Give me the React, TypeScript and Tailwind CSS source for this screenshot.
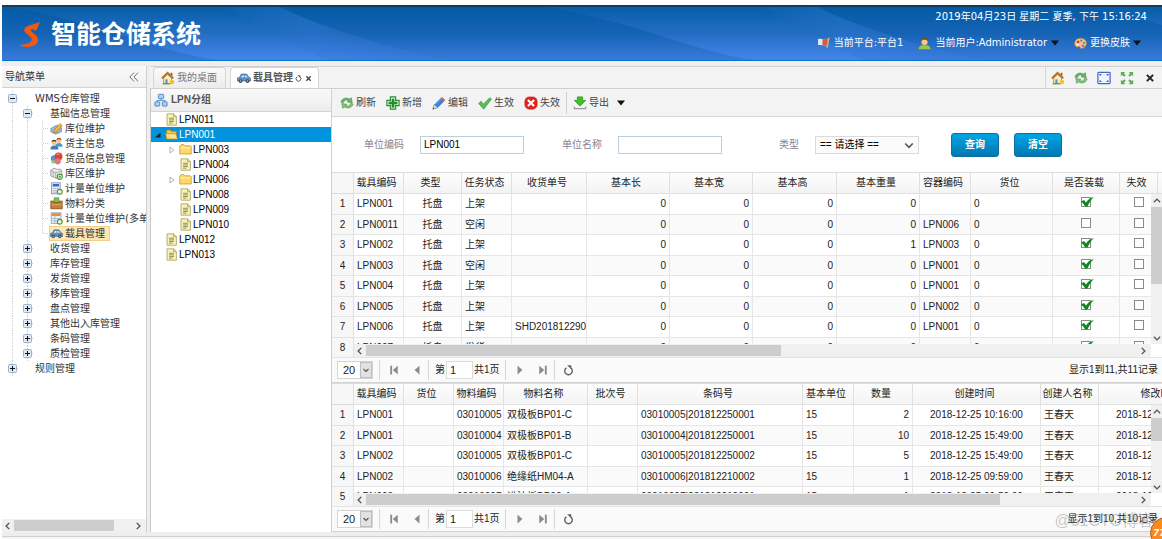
import type { ReactNode } from "react";

// ─── Types ────────────────────────────────────────────────────────────────────

interface IconProps {
  className?: string;
}

type Icon = (props: IconProps) => ReactNode;
type CellKind = "line" | "elbow" | "end" | "plus" | "minus" | "blank";

interface NavNode {
  label: string;
  cells: CellKind[];
  icon?: Icon;
  active?: boolean;
}

interface Column {
  title: string;
  width: string;
  align?: string;
}

// ─── Icons ────────────────────────────────────────────────────────────────────

function Svg({ className = "size-3.5", children }: IconProps & { children: ReactNode }) {
  return (
    <svg viewBox="0 0 16 16" className={`${className} shrink-0`} fill="none" aria-hidden="true">
      {children}
    </svg>
  );
}

const LogoIcon = ({ className }: IconProps) => (
  <svg viewBox="0 0 22 26" className={className} aria-hidden="true">
    <path
      d="M21 0 9 4C5 5.500 4 9 7 11l5 4.500c1.500 2 .5 4.500-2 5.500L0 23.500c7 2.500 15 1.500 18-2 2-3 1-6.500-2-9l-3.500-3c-1-1-.5-2 .5-2.500L17 9Z"
      fill="#ee5a13"
    />
  </svg>
);

const HomeIcon: Icon = ({ className }) => (
  <Svg className={className}>
    <path d="M3 8v6.500h9V8L7.500 4Z" fill="#f6ecd0" stroke="#a98a54" />
    <path d="M1 8.500 7.500 2 14 8.500" stroke="#b4701f" strokeWidth="2.200" />
    <path d="M11 2h2v4l-2-2Z" fill="#9a5a22" />
    <path d="M5 9.500h2.500v5H5Z" fill="#6f8fae" />
    <circle cx="12.500" cy="12.500" r="2.600" fill="#f1c22e" />
    <path d="M2 14.500h8" stroke="#5fa53c" strokeWidth="1.500" />
  </Svg>
);

const RefreshIcon: Icon = ({ className }) => (
  <Svg className={className}>
    <path d="M1 7C2 3 7 1 10.500 3.500L13 2l1 6-6-1.500 1.800-1.200C7.500 4 4.500 4.500 4 7.500Z" fill="#6db26a" stroke="#3e8a44" strokeWidth=".6" />
    <path d="M15 9c-1 4-6 6-9.500 3.500L3 14 2 8.500l6 1-1.800 1.200C8.500 12 11.500 11.500 12 8.500Z" fill="#86c47f" stroke="#3e8a44" strokeWidth=".6" />
  </Svg>
);

const CarIcon: Icon = ({ className }) => (
  <Svg className={className}>
    <path d="M.5 11.500V8L3 7l2-3.500h6L13.500 7l2 1v3.500Z" fill="#5f8fc4" stroke="#35608f" strokeWidth=".7" />
    <path d="M4.500 7 6 5h2v2Zm4.500 0V5h1.500L12 7Z" fill="#dcebf8" />
    <circle cx="4" cy="11.500" r="2.200" fill="#3d4d5e" />
    <circle cx="12" cy="11.500" r="2.200" fill="#3d4d5e" />
    <circle cx="4" cy="11.500" r=".8" fill="#ccc" />
    <circle cx="12" cy="11.500" r=".8" fill="#ccc" />
  </Svg>
);

const OrgIcon: Icon = ({ className }) => (
  <Svg className={className}>
    <path d="M8 6v3M3.500 11V8.500h9V11" stroke="#5a8fc4" />
    <rect x="5" y="1.500" width="6" height="5" rx="1" fill="#a9d1f5" stroke="#3f82c4" />
    <rect x="1" y="10" width="5.500" height="5" rx="1" fill="#a9d1f5" stroke="#3f82c4" />
    <rect x="9.500" y="10" width="5.500" height="5" rx="1" fill="#a9d1f5" stroke="#3f82c4" />
  </Svg>
);

const FlagIcon: Icon = ({ className }) => (
  <Svg className={className}>
    <path d="M0 3c4-2 7 1 13-1l-1 9c-5 2-7-1-12 0Z" fill="#dbe9f6" />
    <path d="M6 2.800c2 .2 4 .2 7-.8l-1 9c-2.500.8-4 .6-6 .2Z" fill="#e2533b" />
    <path d="m14.500 1-2.500 14" stroke="#d6b27c" strokeWidth="1.800" />
  </Svg>
);

const UserIcon: Icon = ({ className }) => (
  <Svg className={className}>
    <path d="M.5 15.500c0-4 2.500-6 7.500-6s7.500 2 7.500 6Z" fill="#9cc34a" stroke="#5e8420" strokeWidth=".7" />
    <circle cx="8" cy="5.800" r="4" fill="#f1c795" />
    <path d="M3.800 6C3.300 2 5.500.5 8 .5S12.700 2 12.200 6c-1-2-2-2.500-4.200-2.500S4.800 4 3.800 6Z" fill="#7d4a1c" />
  </Svg>
);

const PaletteIcon: Icon = ({ className }) => (
  <Svg className={className}>
    <path d="M8 1.500C3 1.500.3 5 .8 9c.5 3 3 4 4.500 3s2 .5 2.500 1.500c2 2 7.500-1 7.500-6 0-4-3.300-6-7.300-6Z" fill="#f0c48c" stroke="#b4793a" strokeWidth=".8" />
    <circle cx="5" cy="6" r="1.600" fill="#d83a2c" />
    <circle cx="9" cy="4.400" r="1.400" fill="#3e85d0" />
    <circle cx="12.300" cy="7.300" r="1.400" fill="#57a83a" />
    <circle cx="4.500" cy="9.500" r="1.200" fill="#fff" />
    <circle cx="11" cy="11" r="1.400" fill="#9a4fb5" />
  </Svg>
);

const FitIcon: Icon = ({ className }) => (
  <Svg className={className}>
    <rect x="1" y="1.500" width="14" height="13" rx="1" fill="#eef3ff" stroke="#4468c8" strokeWidth="1.400" />
    <path d="M3.500 5.500V4H5M11 4h1.500v1.500M12.500 10.500V12H11M5 12H3.500v-1.500" stroke="#2f50b4" strokeWidth="1.200" />
  </Svg>
);

const ExpandIcon: Icon = ({ className }) => (
  <Svg className={className}>
    <path d="M1 1h5L4.500 2.500 6.500 5 5 6.500 2.500 4.500 1 6ZM15 1v5l-1.500-1.500L11 6.500 9.500 5l2-2.500L10 1ZM1 15v-5l1.500 1.500L5 9.500 6.500 11l-2 2.500L6 15ZM15 15h-5l1.500-1.500-2-2.500L11 9.500l2.500 2L15 10Z" fill="#5fae57" />
  </Svg>
);

const CloseIcon: Icon = ({ className }) => (
  <Svg className={className}>
    <path d="m3 3 10 10M13 3 3 13" stroke="currentColor" strokeWidth="3.200" />
  </Svg>
);

const ReloadIcon: Icon = ({ className }) => (
  <Svg className={className}>
    <path d="M5 4a5.500 5.500 0 1 0 6 0" stroke="currentColor" strokeWidth="2" />
    <path d="M6 .5h6V6Z" fill="currentColor" />
  </Svg>
);

const AddIcon: Icon = ({ className }) => (
  <Svg className={className}>
    <path d="M5 1h6v4h4v6h-4v4H5v-4H1V5h4Z" fill="#d9f2d6" stroke="#2f8a35" strokeWidth="1.300" />
    <path d="M6.500 3h3v3.500H13v3H9.500V13h-3V9.500H3v-3h3.500Z" fill="#1d9128" />
  </Svg>
);

const EditIcon: Icon = ({ className }) => (
  <Svg className={className}>
    <path d="m1 15 1.500-5L10 2.500 13.500 6 6 13.500Z" fill="#3b86dd" stroke="#1c58a8" strokeWidth=".7" />
    <path d="m3.500 9.500 7-7" stroke="#a7d2fa" />
    <path d="m10 2.500 1.500-1.500 3.700 3.500L13.500 6Z" fill="#e2603c" />
    <path d="m1 15 1.500-5L6 13.500Z" fill="#f5dcae" />
    <path d="m1 15 .6-2 1.500 1.400Z" fill="#333" />
  </Svg>
);

const TickIcon: Icon = ({ className }) => (
  <Svg className={className}>
    <path d="M.8 8.500 3.500 6 6 9.500l7.500-7.500 1.800 1.500L6.500 15Z" fill="#5cbf55" stroke="#2e8b34" strokeWidth=".8" />
  </Svg>
);

const CrossIcon: Icon = ({ className }) => (
  <Svg className={className}>
    <rect x="1" y="1" width="14" height="14" rx="5" fill="#e3241d" stroke="#b01410" strokeWidth=".6" />
    <path d="m4.500 4.500 7 7M11.500 4.500l-7 7" stroke="#fff" strokeWidth="2.400" />
  </Svg>
);

const ExportIcon: Icon = ({ className }) => (
  <Svg className={className}>
    <path d="M5 1h6v4h3.500L8 11.500 1.500 5H5Z" fill="#39c424" stroke="#228a16" strokeWidth=".8" />
    <path d="M1.500 12v2.500h13V12" stroke="#9a9a9a" strokeWidth="1.400" />
  </Svg>
);

const FileIcon: Icon = ({ className }) => (
  <Svg className={className}>
    <path d="M2.500 1h8L14 4.500V15H2.500Z" fill="#f7f3b4" stroke="#a6a05a" />
    <path d="M10.500 1v3.500H14" stroke="#a6a05a" />
    <path d="M5 6.500h6M5 8.500h6M5 10.500h6M5 12.500h4" stroke="#7f7b52" />
  </Svg>
);

const FolderIcon: Icon = ({ className }) => (
  <Svg className={className}>
    <path d="M1 13.500v-10L2.500 2H6l1.500 1.500H14l1 1v9Z" fill="#ffd867" stroke="#c99a22" />
    <path d="M1.800 6h12.400" stroke="#fff1b4" strokeWidth="1.500" />
  </Svg>
);

const FolderOpenIcon: Icon = ({ className }) => (
  <Svg className={className}>
    <path d="M2 13V3.500L3 2.500h3.500L8 4h6v3" fill="#f5c64a" stroke="#b98a1c" />
    <path d="M2.500 13.500.8 7h12.400l2.300 6.500Z" fill="#ffe48c" stroke="#c99a22" />
  </Svg>
);

const ShelfIcon: Icon = ({ className }) => (
  <Svg className={className}>
    <path d="M1 8 8 4l6 3v5l-7 3-6-3Z" fill="#9db8d8" stroke="#5f7ea6" strokeWidth=".8" />
    <path d="m5 10 7-8 3 2.500-7 8-3.500.5Z" fill="#f5b53c" stroke="#a8701a" strokeWidth=".8" />
  </Svg>
);

const PeopleIcon: Icon = ({ className }) => (
  <Svg className={className}>
    <path d="M6.500 12c0-3 1.500-4.500 4.500-4.500s4.500 1.500 4.500 4.500Z" fill="#4f9ad8" />
    <circle cx="11" cy="4.500" r="3" fill="#f3c795" />
    <path d="M8 4c0-4 6-4 6 0-2-1.500-4-1.500-6 0Z" fill="#a8431c" />
    <path d="M.5 15.500c0-3.500 1.500-5 5-5s5 1.500 5 5Z" fill="#3f7fbe" />
    <circle cx="5" cy="7" r="3" fill="#f3c795" />
    <path d="M2 6.500c0-4 6-4 6 0-2-1.500-4-1.500-6 0Z" fill="#5e3516" />
  </Svg>
);

const GoodsIcon: Icon = ({ className }) => (
  <Svg className={className}>
    <circle cx="5" cy="8" r="4" fill="#5b93cf" />
    <circle cx="10.500" cy="5.500" r="4.800" fill="#d8433a" />
    <circle cx="9.500" cy="11.500" r="3.800" fill="#e9737a" />
    <path d="M8 3.500c1-1 3-1.200 4-.5" stroke="#f7b0aa" strokeWidth="1.200" />
    <circle cx="4" cy="12" r="2.300" fill="#8fbf7a" />
  </Svg>
);

const CubeIcon: Icon = ({ className }) => (
  <Svg className={className}>
    <path d="m1 4 4-2.500 4 1.500 4-.5 1.500 3v6L8 14l-7-3Z" fill="#ececec" stroke="#8f8f8f" />
    <path d="m1 4.500 6 2.500 7.500-2M7 7v6.500M4 6v6" stroke="#9c9c9c" />
    <circle cx="12" cy="12" r="3.200" fill="#eaf6e2" stroke="#4d9a3a" strokeWidth="1.300" />
    <path d="M12 10.500v3M10.500 12h3" stroke="#3a8a2b" />
  </Svg>
);

const CalcIcon: Icon = ({ className }) => (
  <Svg className={className}>
    <rect x="2" y="1" width="10.500" height="13.500" fill="#e6edf6" stroke="#7287a5" />
    <rect x="3.500" y="2.500" width="7.500" height="3" fill="#3a68b4" />
    <path d="M4 8h7M4 10.500h5M4 12.500h4" stroke="#8796ac" strokeDasharray="1.500 1" />
    <circle cx="12" cy="12" r="3" fill="#eaf6e2" stroke="#4d9a3a" strokeWidth="1.400" />
  </Svg>
);

const BoxIcon: Icon = ({ className }) => (
  <Svg className={className}>
    <rect x="5" y="1" width="6" height="6" fill="#7cc24e" stroke="#55852f" strokeWidth=".7" />
    <path d="M1 5h3.500v2h7V5H15v9.500H1Z" fill="#c57f3a" stroke="#84501c" />
    <path d="M1.500 9.500h13" stroke="#e2a765" strokeWidth="1.200" />
  </Svg>
);

const SheetIcon: Icon = ({ className }) => (
  <Svg className={className}>
    <rect x="1.500" y="1" width="12" height="13" fill="#eef3f9" stroke="#8ba0bd" />
    <rect x="2" y="1.500" width="11" height="3.500" fill="#f08a3a" />
    <path d="M2 8h11M2 11h8M6 5v9" stroke="#9bb0ca" />
    <circle cx="12" cy="12" r="3" fill="#eaf6e2" stroke="#4d9a3a" strokeWidth="1.400" />
  </Svg>
);

const Caret: Icon = ({ className = "h-1.5 w-2" }) => (
  <svg viewBox="0 0 8 5" className={`${className} shrink-0`} aria-hidden="true">
    <path d="M0 0h8L4 5Z" fill="#111" />
  </svg>
);

function Chevron({ d, className = "size-2.5" }: IconProps & { d: "up" | "down" | "left" | "right" }) {
  const paths = { up: "M3 10 8 5l5 5", down: "m3 6 5 5 5-5", left: "m10 3-5 5 5 5", right: "m6 3 5 5-5 5" };
  return (
    <Svg className={className}>
      <path d={paths[d]} stroke="#555" strokeWidth="2.200" />
    </Svg>
  );
}

// ─── Data ─────────────────────────────────────────────────────────────────────

const NAV: NavNode[] = [
  { label: "WMS仓库管理", cells: ["minus", "blank"] },
  { label: "基础信息管理", cells: ["line", "minus", "blank"] },
  { label: "库位维护", cells: ["line", "line", "elbow"], icon: ShelfIcon },
  { label: "货主信息", cells: ["line", "line", "elbow"], icon: PeopleIcon },
  { label: "货品信息管理", cells: ["line", "line", "elbow"], icon: GoodsIcon },
  { label: "库区维护", cells: ["line", "line", "elbow"], icon: CubeIcon },
  { label: "计量单位维护", cells: ["line", "line", "elbow"], icon: CalcIcon },
  { label: "物料分类", cells: ["line", "line", "elbow"], icon: BoxIcon },
  { label: "计量单位维护(多单位)", cells: ["line", "line", "elbow"], icon: SheetIcon },
  { label: "载具管理", cells: ["line", "line", "end"], icon: CarIcon, active: true },
  { label: "收货管理", cells: ["line", "plus", "blank"] },
  { label: "库存管理", cells: ["line", "plus", "blank"] },
  { label: "发货管理", cells: ["line", "plus", "blank"] },
  { label: "移库管理", cells: ["line", "plus", "blank"] },
  { label: "盘点管理", cells: ["line", "plus", "blank"] },
  { label: "其他出入库管理", cells: ["line", "plus", "blank"] },
  { label: "条码管理", cells: ["line", "plus", "blank"] },
  { label: "质检管理", cells: ["line", "plus", "blank"] },
  { label: "规则管理", cells: ["plus", "blank"] },
];

const LPN_TREE = [
  { label: "LPN011", child: false, icon: FileIcon, arrow: "" },
  { label: "LPN001", child: false, icon: FolderOpenIcon, arrow: "open" },
  { label: "LPN003", child: true, icon: FolderIcon, arrow: "closed" },
  { label: "LPN004", child: true, icon: FileIcon, arrow: "" },
  { label: "LPN006", child: true, icon: FolderIcon, arrow: "closed" },
  { label: "LPN008", child: true, icon: FileIcon, arrow: "" },
  { label: "LPN009", child: true, icon: FileIcon, arrow: "" },
  { label: "LPN010", child: true, icon: FileIcon, arrow: "" },
  { label: "LPN012", child: false, icon: FileIcon, arrow: "" },
  { label: "LPN013", child: false, icon: FileIcon, arrow: "" },
];

const TOOLS = [
  { label: "刷新", icon: RefreshIcon },
  { label: "新增", icon: AddIcon },
  { label: "编辑", icon: EditIcon },
  { label: "生效", icon: TickIcon },
  { label: "失效", icon: CrossIcon },
];

const CARRIER_COLUMNS: Column[] = [
  { title: "载具编码", width: "w-[50px]" },
  { title: "类型", width: "w-[58px]", align: "text-center" },
  { title: "任务状态", width: "w-[50px]" },
  { title: "收货单号", width: "w-[75px]" },
  { title: "基本长", width: "w-[83px]", align: "text-right" },
  { title: "基本宽", width: "w-[83px]", align: "text-right" },
  { title: "基本高", width: "w-[84px]", align: "text-right" },
  { title: "基本重量", width: "w-[83px]", align: "text-right" },
  { title: "容器编码", width: "w-[51px]" },
  { title: "货位", width: "w-[82px]" },
  { title: "是否装载", width: "w-[67px]", align: "text-center" },
  { title: "失效", width: "w-[38px]", align: "text-center" },
  { title: "", width: "w-[60px]" },
];

const CARRIER_ROWS: (string | boolean)[][] = [
  ["LPN001", "托盘", "上架", "", "0", "0", "0", "0", "", "0", true, false, ""],
  ["LPN0011", "托盘", "空闲", "", "0", "0", "0", "0", "LPN006", "0", false, false, ""],
  ["LPN002", "托盘", "上架", "", "0", "0", "0", "1", "LPN003", "0", true, false, ""],
  ["LPN003", "托盘", "空闲", "", "0", "0", "0", "0", "LPN001", "0", true, false, ""],
  ["LPN004", "托盘", "上架", "", "0", "0", "0", "0", "LPN001", "0", true, false, ""],
  ["LPN005", "托盘", "上架", "", "0", "0", "0", "0", "LPN002", "0", true, false, ""],
  ["LPN006", "托盘", "上架", "SHD20181229001", "0", "0", "0", "0", "LPN001", "0", true, false, ""],
  ["LPN007", "托盘", "发货", "", "0", "0", "0", "0", "", "0", true, false, ""],
];

const STOCK_COLUMNS: Column[] = [
  { title: "载具编码", width: "w-[50px]" },
  { title: "货位", width: "w-[50px]" },
  { title: "物料编码", width: "w-[50px]" },
  { title: "物料名称", width: "w-[84px]" },
  { title: "批次号", width: "w-[50px]" },
  { title: "条码号", width: "w-[165px]" },
  { title: "基本单位", width: "w-[51px]" },
  { title: "数量", width: "w-[59px]", align: "text-right" },
  { title: "创建时间", width: "w-[128px]", align: "text-center" },
  { title: "创建人名称", width: "w-[58px]" },
  { title: "修改时间", width: "w-[128px]", align: "text-center" },
];

const STOCK_ROWS: (string | boolean)[][] = [
  ["LPN001", "", "03010005", "双极板BP01-C", "", "03010005|201812250001", "15", "2", "2018-12-25 10:16:00", "王春天", "2018-12-25 10:16:00"],
  ["LPN001", "", "03010004", "双极板BP01-B", "", "03010004|201812250001", "15", "10", "2018-12-25 15:49:00", "王春天", "2018-12-25 15:49:00"],
  ["LPN002", "", "03010005", "双极板BP01-C", "", "03010005|201812250002", "15", "5", "2018-12-25 15:49:00", "王春天", "2018-12-25 15:49:00"],
  ["LPN002", "", "03010006", "绝缘纸HM04-A", "", "03010006|201812210002", "15", "1", "2018-12-25 09:59:00", "王春天", "2018-12-25 09:59:00"],
  ["LPN003", "", "03010007", "进油板BP02-A", "", "03010007|201812210001", "15", "1", "2018-12-25 09:59:00", "王春天", "2018-12-25 09:59:00"],
];

// ─── Header ───────────────────────────────────────────────────────────────────

function HeaderWaves() {
  return (
    <svg className="absolute inset-0 h-full w-full" aria-hidden="true">
      <defs>
        <linearGradient id="sheet" x1="0" y1="0" x2="0" y2="1">
          <stop offset="0" stopColor="#5b9bff" stopOpacity=".04" />
          <stop offset="1" stopColor="#5b9bff" stopOpacity=".35" />
        </linearGradient>
        <linearGradient id="beam" x1="0" y1="0" x2="1" y2="0">
          <stop offset="0" stopColor="#5b9bff" stopOpacity=".1" />
          <stop offset=".35" stopColor="#5b9bff" stopOpacity=".22" />
          <stop offset="1" stopColor="#5b9bff" stopOpacity="0" />
        </linearGradient>
        <pattern id="waves" x="8" width="537" height="55" patternUnits="userSpaceOnUse">
          <path d="M0 0c60 10 110 28 143 38s60 16 90 17h85L218 0Z" fill="url(#sheet)" />
          <path d="m218 0 100 55h130C380 42 310 20 270 0Z" fill="url(#beam)" />
        </pattern>
      </defs>
      <rect width="100%" height="100%" fill="url(#waves)" />
    </svg>
  );
}

function Header() {
  return (
    <header className="relative flex h-14 shrink-0 justify-between overflow-hidden border-t-2 border-b border-t-[#17395c] border-b-[#0d6fce] bg-linear-to-b from-[#025ba5] via-[#1563b5] to-[#367bdc] text-white">
      <HeaderWaves />
      <div className="relative flex items-center gap-2.5 pt-[3px] pl-[17px]">
        <LogoIcon className="h-[26px] w-[22px]" />
        <h1 className="text-[25px] leading-8 font-bold">智能仓储系统</h1>
      </div>
      <div className="relative flex flex-col items-end gap-3 pt-[3px] leading-[14px]">
        <p className="pr-[15px]">2019年04月23日 星期二 夏季, 下午 15:16:24</p>
        <div className="flex items-center gap-[15px] pr-[21px]">
          <span className="flex items-center gap-1">
            <FlagIcon className="size-3" />
            当前平台:平台1
          </span>
          <button className="flex items-center gap-1">
            <UserIcon className="size-[13px]" />
            当前用户:Administrator
            <Caret />
          </button>
          <button className="flex items-center gap-[3px]">
            <PaletteIcon className="size-[13px]" />
            更换皮肤
            <Caret />
          </button>
        </div>
      </div>
    </header>
  );
}

// ─── Navigation tree ──────────────────────────────────────────────────────────

function TreeCell({ kind }: { kind: CellKind }) {
  const box = kind === "plus" || kind === "minus";
  return (
    <svg viewBox="0 0 15 15" className="size-[15px] shrink-0" fill="none" aria-hidden="true">
      {kind !== "blank" && (
        <path d={kind === "end" ? "M7.500 0v8" : "M7.500 0v15"} stroke="#cfcfcf" strokeDasharray="1 1" />
      )}
      {kind !== "blank" && kind !== "line" && <path d="M8 7.500h6" stroke="#cfcfcf" strokeDasharray="1 1" />}
      {box && (
        <>
          <rect x="3.500" y="3.500" width="8" height="8" rx="1" fill="#dfe9f4" stroke="#9cb3cd" />
          <path d={kind === "plus" ? "M5 7.500h5M7.500 5v5" : "M5 7.500h5"} stroke="#111" />
        </>
      )}
    </svg>
  );
}

function NavPanel() {
  return (
    <aside className="flex w-[145px] shrink-0 flex-col border-r border-[#d0d0d0] bg-white">
      <div className="flex h-[22px] shrink-0 items-center justify-between border-b border-[#d3d3d3] bg-linear-to-b from-[#fafafa] to-[#efefef] pr-[7px] pl-[3px]">
        <h2 className="text-[#333]">导航菜单</h2>
        <button aria-label="收起" className="text-[#666]">
          <Svg className="size-2.5">
            <path d="M8 1 1.500 8 8 15M14.500 1 8 8l6.500 7" stroke="currentColor" strokeWidth="1.500" />
          </Svg>
        </button>
      </div>
      <ul className="flex-1 overflow-hidden pt-[3px] pl-[3px]">
        {NAV.map((node) => (
          <li key={node.label} className="flex h-[15px] items-center whitespace-nowrap text-[#333]">
            {node.cells.map((kind, i) => (
              <TreeCell key={i} kind={kind} />
            ))}
            <span
              className={`flex items-center gap-0.5 leading-[13px] ${
                node.active ? "bg-[#fbe6b4] pr-1 outline outline-[#f1cf8a]" : ""
              }`}
            >
              {node.icon && <node.icon className="size-[13px]" />}
              {node.label}
            </span>
          </li>
        ))}
      </ul>
      <HScroll thumb="w-[100px]" />
    </aside>
  );
}

// ─── Scrollbars ───────────────────────────────────────────────────────────────

function HScroll({ thumb }: { thumb: string }) {
  return (
    <div className="flex h-[13px] shrink-0 items-center justify-between bg-[#f0f0f0] pr-0.5">
      <div className="flex h-full flex-1 items-center">
        <button aria-label="向左" className="flex w-3 justify-center">
          <Chevron d="left" />
        </button>
        <div className={`h-[11px] bg-[#cdcdcd] ${thumb}`} />
      </div>
      <button aria-label="向右" className="flex w-3 justify-center">
        <Chevron d="right" />
      </button>
    </div>
  );
}

function VScroll({ thumb }: { thumb: string }) {
  return (
    <div className="absolute top-[21px] right-0 bottom-0 flex w-[11px] flex-col items-center justify-between bg-[#f0f0f0]">
      <div className="flex w-full flex-col items-center">
        <button aria-label="向上" className="flex h-[13px] items-center">
          <Chevron d="up" />
        </button>
        <div className={`w-full bg-[#cdcdcd] ${thumb}`} />
      </div>
      <button aria-label="向下" className="flex h-[13px] items-center">
        <Chevron d="down" />
      </button>
    </div>
  );
}

// ─── Data grid ────────────────────────────────────────────────────────────────

function CheckCell({ checked, label }: { checked: boolean; label: string }) {
  return (
    <span className="relative mx-auto flex size-[10px] -translate-y-0.5">
      <input
        type="checkbox"
        aria-label={label}
        checked={checked}
        readOnly
        className="size-[10px] appearance-none border border-[#8a8a8a] bg-white"
      />
      {checked && (
        <svg viewBox="0 0 13 10" className="absolute bottom-0 left-0 h-[10px] w-[13px]" aria-hidden="true">
          <path d="M0 4.500 3 3l2 2.500C7 2.500 9.500.5 13 0 10 2.500 8 6 6.500 9.500H4C3 7.500 2 6 0 4.500Z" fill="#0b8a1b" />
        </svg>
      )}
    </span>
  );
}

interface GridProps {
  name: string;
  columns: Column[];
  rows: (string | boolean)[][];
  tableWidth: string;
  height: string;
  hThumb: string;
  vThumb: string;
}

function DataGrid({ name, columns, rows, tableWidth, height, hThumb, vThumb }: GridProps) {
  return (
    <div className={`flex min-h-0 overflow-hidden border-t border-[#dcdcdc] bg-white ${height}`}>
      <div className="w-[22px] shrink-0 overflow-hidden border-r border-[#e0e0e0] bg-[#f7f7f7] text-center">
        <div className="h-[21px] border-b border-[#dcdcdc]" />
        {rows.map((_, i) => (
          <div key={i} className="h-[21px] border-b border-[#e4e4e4] leading-5 odd:h-5">
            {i + 1}
          </div>
        ))}
      </div>
      <div className="flex min-w-0 flex-1 flex-col">
        <div className="relative min-h-0 flex-1 overflow-hidden">
          <table aria-label={name} className={`table-fixed border-separate border-spacing-0 leading-[14px] whitespace-nowrap ${tableWidth}`}>
            <thead>
              <tr className="h-[21px] bg-linear-to-b from-[#fdfdfd] to-[#f3f3f3]">
                {columns.map((col, i) => (
                  <th
                    key={i}
                    className={`overflow-hidden border-r border-b border-[#e0e0e0] p-0 pr-1 text-center font-normal ${col.width}`}
                  >
                    {col.title}
                  </th>
                ))}
              </tr>
            </thead>
            <tbody>
              {rows.map((row, r) => (
                <tr key={r} className="h-[21px] even:h-5 even:bg-[#fafafa]">
                  {row.map((value, c) => (
                    <td
                      key={c}
                      className={`overflow-hidden border-r border-b border-[#e6e6e6] px-[3px] py-0 ${columns[c].align ?? ""}`}
                    >
                      {typeof value === "boolean" ? <CheckCell checked={value} label={columns[c].title} /> : value}
                    </td>
                  ))}
                </tr>
              ))}
            </tbody>
          </table>
          <VScroll thumb={vThumb} />
        </div>
        <div className="mr-[11px]">
          <HScroll thumb={hThumb} />
        </div>
      </div>
    </div>
  );
}

function Separator() {
  return <span className="h-5 w-px shrink-0 bg-[#d6d6d6]" />;
}

function PageButton({ label, d }: { label: string; d: string }) {
  return (
    <button aria-label={label} className="flex w-[23px] justify-center text-[#8c8c8c]">
      <Svg className="size-2.5">
        <path d={d} fill="currentColor" />
      </Svg>
    </button>
  );
}

function Pager({ name, total }: { name: string; total: number }) {
  return (
    <div className="flex h-[26px] shrink-0 items-center border-t border-b border-t-[#e4e4e4] border-b-[#d3d3d3] bg-[#fafafa] pr-1 pl-[5px]">
      <div className="relative flex h-[18px] w-9 border border-[#d5d5d5] bg-white">
        <select aria-label={`${name}每页条数`} className="w-full appearance-none pl-[5px] text-[11px] leading-4">
          <option>20</option>
        </select>
        <span className="pointer-events-none absolute inset-y-0 right-0 flex w-3 items-center justify-center border border-[#bdbdbd] bg-[#e2e2e2]">
          <Chevron d="down" className="size-2" />
        </span>
      </div>
      <span className="w-1.5" />
      <Separator />
      <span className="w-0.5" />
      <PageButton label="首页" d="M2 1h3v14H2ZM14 1v14L6 8Z" />
      <PageButton label="上一页" d="M12 1v14L4 8Z" />
      <Separator />
      <label className="flex items-center gap-px pl-1.5">
        第
        <input defaultValue="1" className="h-[18px] w-[27px] border border-[#dcdcdc] bg-white pl-[3px] text-[11px]" />
      </label>
      <span className="w-8 pl-px">共1页</span>
      <Separator />
      <span className="w-0.5" />
      <PageButton label="下一页" d="M4 1v14l8-7Z" />
      <PageButton label="末页" d="M2 1v14l8-7ZM11 1h3v14h-3Z" />
      <Separator />
      <button aria-label="刷新" className="flex w-[26px] justify-center text-[#665c5c]">
        <ReloadIcon className="size-[11px]" />
      </button>
      <span className="ml-auto">{`显示1到${total},共${total}记录`}</span>
    </div>
  );
}

// ─── Workspace ────────────────────────────────────────────────────────────────

function TabStrip() {
  return (
    <div className="flex h-[23px] shrink-0 justify-between border-t border-b border-[#d0d0d0] bg-[#f3f3f3]">
      <div className="flex gap-1 pl-[3px]">
        <button className="flex w-[73px] items-center gap-0.5 rounded-t border-x border-t border-[#d5d5d5] bg-linear-to-b from-[#fafafa] to-[#ececec] pl-[7px] text-[#777]">
          <HomeIcon />
          我的桌面
        </button>
        <div className="flex w-[89px] items-center rounded-t border-x border-t border-[#d5d5d5] bg-white pl-[6px] text-[#555]">
          <button className="flex items-center gap-0.5 font-bold">
            <CarIcon />
            载具管理
          </button>
          <button aria-label="刷新标签" className="ml-0.5 text-[#444]">
            <ReloadIcon className="size-[7px]" />
          </button>
          <button aria-label="关闭标签" className="ml-[3px] text-[#444]">
            <CloseIcon className="size-[7px]" />
          </button>
        </div>
      </div>
      <div className="flex items-center gap-[9px] border-l border-[#d5d5d5] px-[5px] text-[#222]">
        <button aria-label="首页">
          <HomeIcon />
        </button>
        <button aria-label="刷新">
          <RefreshIcon />
        </button>
        <button aria-label="适应窗口">
          <FitIcon />
        </button>
        <button aria-label="全屏">
          <ExpandIcon />
        </button>
        <button aria-label="关闭" className="flex w-3.5 justify-center">
          <CloseIcon className="size-2.5" />
        </button>
      </div>
    </div>
  );
}

function LpnPanel() {
  return (
    <section className="w-[182px] shrink-0 border-r border-l border-r-[#d0d0d0] border-l-[#c8c8c8] bg-white">
      <h2 className="flex h-[23px] items-center gap-[3px] border-b border-[#d3d3d3] bg-linear-to-b from-[#fafafa] to-[#ececec] pl-[3px] font-bold text-[#555]">
        <OrgIcon />
        LPN分组
      </h2>
      <ul className="text-black">
        {LPN_TREE.map((node) => (
          <li
            key={node.label}
            className={`flex h-[15px] items-center ${node.child ? "pl-3.5" : ""} ${
              node.arrow === "open" ? "bg-[#0092dc] text-white" : ""
            }`}
          >
            <span className="flex w-3.5 justify-center">
              {node.arrow === "open" && (
                <Svg className="size-2">
                  <path d="M13 3v10H2Z" fill="#222" />
                </Svg>
              )}
              {node.arrow === "closed" && (
                <Svg className="size-2">
                  <path d="M4 2v12l8-6Z" fill="#fff" stroke="#999" strokeWidth="1.500" />
                </Svg>
              )}
            </span>
            <node.icon className="mr-px size-[13px]" />
            {node.label}
          </li>
        ))}
      </ul>
    </section>
  );
}

function Toolbar() {
  return (
    <div className="flex h-7 shrink-0 items-center gap-2.5 border-b border-[#d8d8d8] bg-[#f3f3f3] pl-2 text-[#444]">
      {TOOLS.map((tool) => (
        <button key={tool.label} className="flex items-center gap-0.5">
          <tool.icon />
          {tool.label}
        </button>
      ))}
      <button className="-ml-1 flex items-center gap-0.5 border-l border-[#d0d0d0] py-1 pl-1.5">
        <ExportIcon />
        <span className="pr-1.5">导出</span>
        <Caret />
      </button>
    </div>
  );
}

function SearchForm() {
  const field = "ml-4 h-[18px] w-[104px] border border-[#b9cfe0] bg-white px-[3px] text-[10px] text-black";
  const button =
    "h-6 w-12 rounded-[3px] border border-[#0e6f9c] bg-linear-to-b from-[#00a6e6] to-[#0078b0] font-bold text-white";
  return (
    <form className="flex h-[55px] shrink-0 items-center bg-white pl-8 text-[#8a8296]">
      <label className="flex items-center">
        单位编码
        <input className={field} defaultValue="LPN001" />
      </label>
      <label className="ml-[38px] flex items-center">
        单位名称
        <input className={field} />
      </label>
      <label className="relative ml-[57px] flex items-center">
        类型
        <select className="ml-4 h-[18px] w-[104px] appearance-none border border-[#dadada] bg-[#fbfbfb] px-1 leading-4 text-black">
          <option>== 请选择 ==</option>
        </select>
        <Chevron d="down" className="pointer-events-none absolute right-1 size-3" />
      </label>
      <button type="button" className={`ml-8 ${button}`}>
        查询
      </button>
      <button type="button" className={`ml-[15px] ${button}`}>
        清空
      </button>
    </form>
  );
}

export default function App() {
  return (
    <div className="relative flex h-screen flex-col overflow-hidden bg-white pt-[5px] pl-0.5 font-['DejaVu_Sans','Noto_Sans_CJK_SC',sans-serif] text-[10px] leading-[14px] text-[#222]">
      <Header />
      <div className="flex min-h-0 flex-1 flex-col bg-[#eee] pt-[5px]">
        <div className="flex min-h-0 flex-1 gap-[3px]">
          <NavPanel />
          <main className="flex min-w-0 flex-1 flex-col font-['Liberation_Sans','Noto_Sans_CJK_SC',sans-serif]">
            <TabStrip />
            <div className="flex min-h-0 flex-1">
              <LpnPanel />
              <section className="flex min-w-0 flex-1 flex-col">
                <Toolbar />
                <SearchForm />
                <DataGrid
                  name="载具列表"
                  columns={CARRIER_COLUMNS}
                  rows={CARRIER_ROWS}
                  tableWidth="w-[864px]"
                  height="flex-1"
                  hThumb="w-[53%]"
                  vThumb="h-[77px]"
                />
                <Pager name="载具" total={11} />
                <DataGrid
                  name="库存明细"
                  columns={STOCK_COLUMNS}
                  rows={STOCK_ROWS}
                  tableWidth="w-[873px]"
                  height="h-[123px] shrink-0"
                  hThumb="w-[81%]"
                  vThumb="h-[23px]"
                />
                <Pager name="库存" total={10} />
              </section>
            </div>
          </main>
        </div>
        <div className="mt-1 h-[3px] shrink-0 border-t border-[#d0d0d0] bg-[#f5f5f5]" />
      </div>

      <span className="pointer-events-none absolute right-2 bottom-1.5 font-['Liberation_Sans','Noto_Sans_CJK_SC',sans-serif] text-base leading-6 text-[#888]/45">
        @51CTO博客
      </span>
      <span className="absolute -right-5 -bottom-2.5 flex size-8 items-center rounded-full border border-[#b9651c] bg-[#f98a22] pl-0.5 text-[9px] font-bold text-white italic">
        77
      </span>
    </div>
  );
}
